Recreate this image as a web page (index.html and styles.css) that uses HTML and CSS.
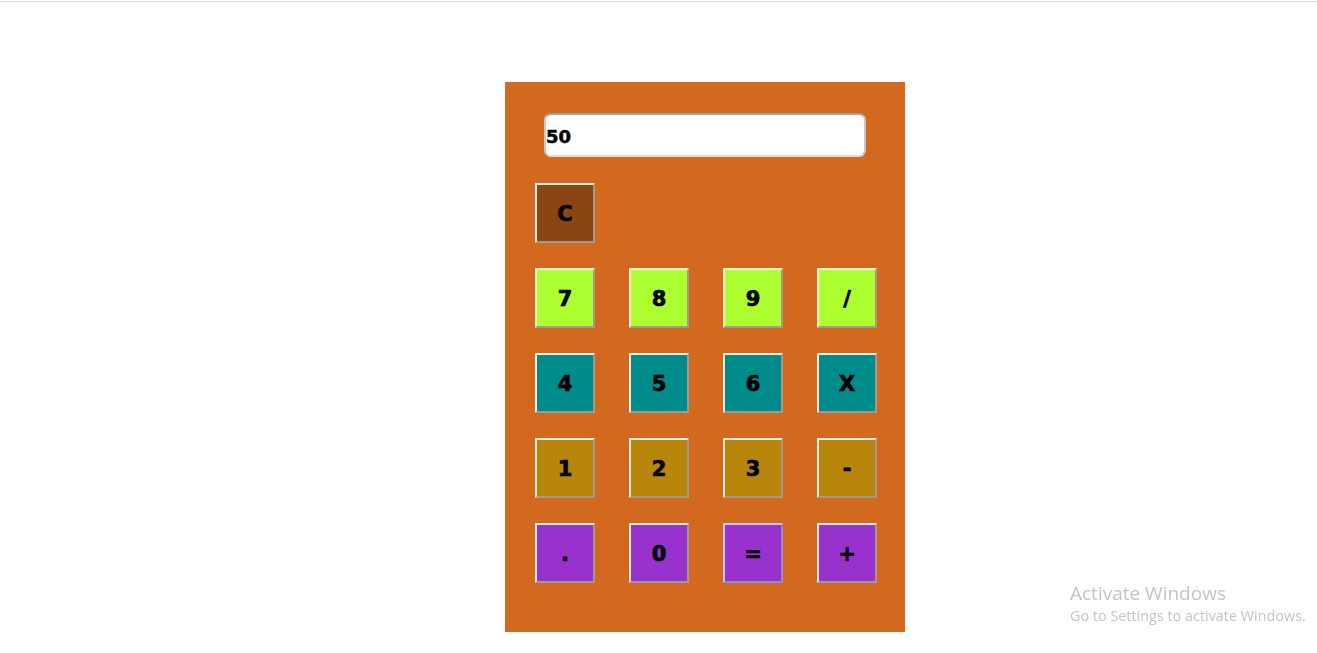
FILE: index.html
```html
<!DOCTYPE html>
<html>
<head>
<meta charset="utf-8">
<title>Calculator</title>
<link rel="stylesheet" href="styles.css">
</head>
<body>
<div class="topline"></div>
<div class="calc">
  <input class="display" type="text" value="50" readonly>
  <div class="keys">
    <button class="key clear">C</button>
    <button class="key green">7</button>
    <button class="key green">8</button>
    <button class="key green">9</button>
    <button class="key green">/</button>
    <button class="key teal">4</button>
    <button class="key teal">5</button>
    <button class="key teal">6</button>
    <button class="key teal">X</button>
    <button class="key gold">1</button>
    <button class="key gold">2</button>
    <button class="key gold">3</button>
    <button class="key gold">-</button>
    <button class="key orchid">.</button>
    <button class="key orchid">0</button>
    <button class="key orchid focused">=</button>
    <button class="key orchid">+</button>
  </div>
</div>
<div class="activate">
  <div class="act-title">Activate Windows</div>
  <div class="act-sub">Go to Settings to activate Windows.</div>
</div>
</body>
</html>
```
FILE: styles.css
```css
html, body {
  margin: 0;
  padding: 0;
  background: #ffffff;
}
body {
  font-family: "DejaVu Sans", "Liberation Sans", sans-serif;
}
.topline {
  margin-top: 1px;
  height: 1px;
  background: #dcdcdc;
}
.calc {
  margin: 80px 0 0 505px;
  width: 400px;
  height: 550px;
  box-sizing: border-box;
  background: #d2691e;
  padding: 31px 28px 0 30px;
}
.display {
  display: block;
  margin: 0 0 0 9px;
  width: 322px;
  height: 44px;
  box-sizing: border-box;
  border-style: solid;
  border-width: 2px;
  border-color: #a3a3a3 #c8c8c8 #dcdcdc #c8c8c8;
  border-radius: 7px;
  background: #ffffff;
  padding: 3px 0 0 0;
  font-family: "DejaVu Sans", "Liberation Sans", sans-serif;
  font-weight: bold;
  font-size: 18px;
  color: #000;
  -webkit-text-stroke: 0.5px #000;
  outline: none;
}
.keys {
  margin-top: 26px;
  display: grid;
  grid-template-columns: repeat(4, 60px);
  grid-auto-rows: 60px;
  column-gap: 34px;
  row-gap: 25px;
}
.key {
  width: 60px;
  height: 60px;
  box-sizing: border-box;
  margin: 0;
  padding: 2px 0 0 0;
  border-style: solid;
  border-width: 2px;
  border-color: #f2eedd #a09a90 #a09a90 #f2eedd;
  font-family: "DejaVu Sans", "Liberation Sans", sans-serif;
  font-weight: bold;
  font-size: 21px;
  color: #000;
  -webkit-text-stroke: 0.7px #000;
  cursor: pointer;
}
.clear + .key {
  grid-column: 1;
}
.clear { background: #8b4513; }
.green { background: #adff2f; }
.teal { background: #008b8b; }
.gold { background: #b8860b; }
.orchid { background: #9932cc; }
.focused {
  border-color: #c4c8ee #8a8fc8 #8a8fc8 #c4c8ee;
}
.activate {
  position: fixed;
  left: 1070px;
  top: 582px;
  font-family: "Open Sans", "Noto Sans", sans-serif;
  color: #c4c4c4;
}
.act-title {
  font-size: 19px;
  line-height: 22px;
}
.act-sub {
  font-size: 14.4px;
  line-height: 24px;
}
```
